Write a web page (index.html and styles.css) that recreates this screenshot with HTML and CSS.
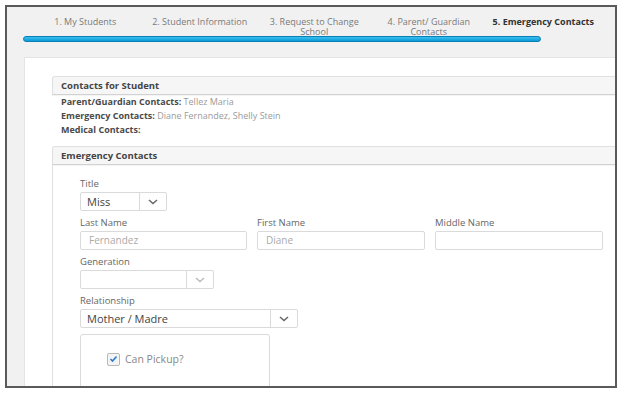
FILE: index.html
```html
<!DOCTYPE html>
<html lang="en">
<head>
    <title>Emergency Contacts</title>
    <link rel="stylesheet" href="styles.css">
</head>
<body>
<div class="frame">
    <div class="steps">
        <div class="step">1. My Students</div>
        <div class="step">2. Student Information</div>
        <div class="step">3. Request to Change School</div>
        <div class="step">4. Parent/ Guardian Contacts</div>
        <div class="step active">5. Emergency Contacts</div>
    </div>
    <div class="progress"></div>

    <div class="page">
        <div class="panel-heading">Contacts for Student</div>
        <div class="summary">
            <div><b>Parent/Guardian Contacts:</b> Tellez Maria</div>
            <div><b>Emergency Contacts:</b> Diane Fernandez, Shelly Stein</div>
            <div><b>Medical Contacts:</b></div>
        </div>

        <div class="panel-heading">Emergency Contacts</div>
        <div class="panel-body">
            <div class="field">
                <label>Title</label>
                <div class="select select-title">
                    <span class="value">Miss</span>
                    <span class="caret"><svg width="10" height="6" viewBox="0 0 10 6"><polyline points="1,1 5,4.5 9,1"/></svg></span>
                </div>
            </div>

            <div class="row">
                <div class="field">
                    <label>Last Name</label>
                    <div class="input placeholder">Fernandez</div>
                </div>
                <div class="field">
                    <label>First Name</label>
                    <div class="input placeholder">Diane</div>
                </div>
                <div class="field">
                    <label>Middle Name</label>
                    <div class="input"></div>
                </div>
            </div>

            <div class="field">
                <label>Generation</label>
                <div class="select select-generation">
                    <span class="value"></span>
                    <span class="caret light"><svg width="10" height="6" viewBox="0 0 10 6"><polyline points="1,1 5,4.5 9,1"/></svg></span>
                </div>
            </div>

            <div class="field">
                <label>Relationship</label>
                <div class="select select-relationship">
                    <span class="value">Mother / Madre</span>
                    <span class="caret"><svg width="10" height="6" viewBox="0 0 10 6"><polyline points="1,1 5,4.5 9,1"/></svg></span>
                </div>
            </div>

            <div class="options">
                <div class="check">
                    <span class="box"><svg width="9" height="8" viewBox="0 0 9 8"><polyline points="1.5,4 3.5,6 7.5,1.5"/></svg></span>
                    Can Pickup?
                </div>
            </div>
        </div>
    </div>
</div>
</body>
</html>
```

FILE: styles.css
```css
body {
    margin: 0;
    background: #fff;
    font-family: "Open Sans", "Liberation Sans", sans-serif;
}
.frame {
    margin: 5px 0 0 5px;
    width: 608px;
    height: 379px;
    border: 2px solid #5a5a5a;
    background: #f1f1f1;
    overflow: hidden;
}
.steps {
    display: grid;
    grid-template-columns: repeat(5, 114.5px);
    margin-left: 21px;
    padding-top: 10px;
    height: 19px;
}
.step {
    font-size: 9px;
    line-height: 10px;
    color: #7a7a7a;
    text-align: center;
    padding: 0 6px;
}
.step.active {
    font-weight: bold;
    color: #333;
    padding: 0;
    white-space: nowrap;
}
.progress {
    margin: 0 0 0 16px;
    width: 516px;
    height: 4px;
    border: 1px solid #0c7fb4;
    border-radius: 4px;
    background: linear-gradient(#39c0f0, #0a9ad8);
}
.page {
    margin: 15px 0 0 17px;
    width: 640px;
    height: 400px;
    background: #fff;
    border-top: 1px solid #e4e4e4;
    border-left: 1px solid #e4e4e4;
    padding: 18px 0 0 27px;
    box-sizing: border-box;
}
.panel-heading {
    height: 17px;
    line-height: 17px;
    padding-left: 8px;
    background: #f6f6f6;
    border: 1px solid #e0e0e0;
    border-bottom-color: #d2d2d2;
    border-radius: 3px 0 0 0;
    font-size: 9.5px;
    font-weight: bold;
    color: #444;
    box-shadow: 0 1px 1px rgba(0, 0, 0, 0.05);
}
.summary {
    padding: 0 0 9px 9px;
    font-size: 9px;
    line-height: 14px;
    color: #9a9a9a;
}
.summary b {
    color: #4a4a4a;
}
.panel-body {
    border-left: 1px solid #e0e0e0;
    padding: 13px 0 0 27px;
    height: 300px;
}
.field {
    margin-bottom: 6px;
}
.field label {
    display: block;
    font-size: 9.5px;
    line-height: 12px;
    color: #666;
    margin-bottom: 2px;
}
.row {
    display: grid;
    grid-template-columns: 167px 168px 168px;
    gap: 10px;
}
.input,
.select {
    height: 17px;
    border: 1px solid #dadada;
    border-radius: 2px;
    box-sizing: content-box;
    font-size: 10px;
    line-height: 17px;
    color: #444;
}
.input {
    padding-left: 8px;
}
.placeholder {
    color: #aaa;
}
.select {
    display: flex;
}
.select .value {
    flex: 1;
    padding-left: 6px;
    border-right: 1px solid #dadada;
    font-size: 11px;
}
.select .caret {
    width: 26px;
    display: flex;
    align-items: center;
    justify-content: center;
}
.caret polyline {
    fill: none;
    stroke: #666;
    stroke-width: 1.5;
}
.caret.light polyline {
    stroke: #bbb;
}
.select-title {
    width: 85px;
}
.select-generation {
    width: 132px;
}
.select-relationship {
    width: 216px;
}
.options {
    width: 190px;
    height: 80px;
    border: 1px solid #dadada;
    border-radius: 3px;
    padding: 17px 0 0 26px;
    box-sizing: border-box;
}
.check {
    display: flex;
    align-items: center;
    gap: 5px;
    font-size: 10.5px;
    color: #888;
}
.check .box {
    width: 11px;
    height: 11px;
    border: 1px solid #b8b8b8;
    border-radius: 2px;
    background: #f4f4f4;
    display: flex;
    align-items: center;
    justify-content: center;
}
.check polyline {
    fill: none;
    stroke: #2b7bd1;
    stroke-width: 1.6;
}
```
